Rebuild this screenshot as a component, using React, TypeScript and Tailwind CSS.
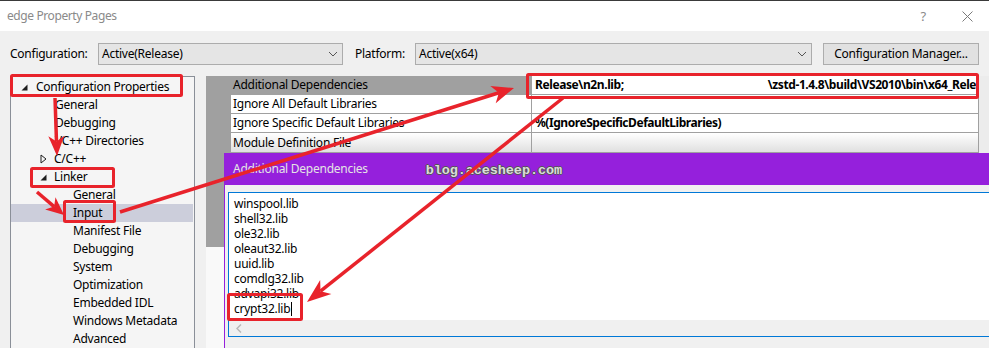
import React from "react";

const RED = "#e8232b";

function Arrow({ x1, y1, x2, y2, hl = 20, hw = 9 }: { x1: number; y1: number; x2: number; y2: number; hl?: number; hw?: number }) {
  const dx = x2 - x1;
  const dy = y2 - y1;
  const len = Math.hypot(dx, dy);
  const ux = dx / len;
  const uy = dy / len;
  const bx = x2 - ux * hl;
  const by = y2 - uy * hl;
  const nx = x2 - ux * hl * 0.72;
  const ny = y2 - uy * hl * 0.72;
  const px = -uy;
  const py = ux;
  return (
    <g>
      <line x1={x1} y1={y1} x2={nx} y2={ny} stroke={RED} strokeWidth={3.5} />
      <polygon
        points={`${x2},${y2} ${bx + px * hw},${by + py * hw} ${nx},${ny} ${bx - px * hw},${by - py * hw}`}
        fill={RED}
      />
    </g>
  );
}

function Expanded() {
  return (
    <svg width="7" height="7" viewBox="0 0 7 7">
      <polygon points="6.5,0.5 6.5,6.5 0.5,6.5" fill="#1e1e1e" />
    </svg>
  );
}

function Collapsed() {
  return (
    <svg width="7" height="10" viewBox="0 0 7 10">
      <polygon points="1,1 6,5 1,9" fill="none" stroke="#1e1e1e" strokeWidth="1" />
    </svg>
  );
}

function Chevron() {
  return (
    <svg width="10" height="6" viewBox="0 0 10 6">
      <polyline points="1,1 5,5 9,1" fill="none" stroke="#555" strokeWidth="1" />
    </svg>
  );
}

type Item = { label: string; kind: "root" | "exp" | "col" | "l1" | "l2"; selected?: boolean };

const items: Item[] = [
  { label: "Configuration Properties", kind: "root" },
  { label: "General", kind: "l1" },
  { label: "Debugging", kind: "l1" },
  { label: "VC++ Directories", kind: "l1" },
  { label: "C/C++", kind: "col" },
  { label: "Linker", kind: "exp" },
  { label: "General", kind: "l2" },
  { label: "Input", kind: "l2", selected: true },
  { label: "Manifest File", kind: "l2" },
  { label: "Debugging", kind: "l2" },
  { label: "System", kind: "l2" },
  { label: "Optimization", kind: "l2" },
  { label: "Embedded IDL", kind: "l2" },
  { label: "Windows Metadata", kind: "l2" },
  { label: "Advanced", kind: "l2" },
];

function TreeRow({ item }: { item: Item }) {
  const base = "flex items-center h-[18px] whitespace-nowrap " + (item.selected ? "bg-[#cccedb]" : "");
  if (item.kind === "root")
    return (
      <div className={base + " pl-[10px]"}>
        <span className="w-[15px] flex items-center">
          <Expanded />
        </span>
        <span>{item.label}</span>
      </div>
    );
  if (item.kind === "exp")
    return (
      <div className={base + " pl-[29px]"}>
        <span className="w-[14px] flex items-center">
          <Expanded />
        </span>
        <span>{item.label}</span>
      </div>
    );
  if (item.kind === "col")
    return (
      <div className={base + " pl-[29px]"}>
        <span className="w-[14px] flex items-center">
          <Collapsed />
        </span>
        <span>{item.label}</span>
      </div>
    );
  if (item.kind === "l1")
    return (
      <div className={base + " pl-[44px]"}>
        <span>{item.label}</span>
      </div>
    );
  return (
    <div className={base + " pl-[62px]"}>
      <span>{item.label}</span>
    </div>
  );
}

const libs = ["winspool.lib", "shell32.lib", "ole32.lib", "oleaut32.lib", "uuid.lib", "comdlg32.lib", "advapi32.lib"];

export default function App() {
  return (
    <div className="relative w-[989px] h-[348px] overflow-hidden bg-[#f0f0f0] text-[12px] tracking-[-0.25px] text-black font-['Noto_Sans',sans-serif] leading-none">
      {/* title bar */}
      <div className="h-[31px] bg-white border-t border-[#3a3a3a] flex items-center pl-[7px] pr-[16px]">
        <span className="text-[#8a8a8a] text-[12px] tracking-[-0.4px]">edge Property Pages</span>
        <span className="ml-auto text-[#8a8a8a] text-[13px] mr-[36px]">?</span>
        <svg width="11" height="11" viewBox="0 0 11 11">
          <path d="M0.5 0.5 L10.5 10.5 M10.5 0.5 L0.5 10.5" stroke="#7a7a7a" strokeWidth="1" />
        </svg>
      </div>

      {/* configuration row */}
      <div className="flex items-center mt-[12px] h-[22px] pl-[10px]">
        <span className="w-[88px]">Configuration:</span>
        <div className="w-[245px] h-[22px] bg-[#e5e5e5] border border-[#acacac] flex items-center pl-[3px] pr-[4px]">
          <span>Active(Release)</span>
          <span className="ml-auto">
            <Chevron />
          </span>
        </div>
        <span className="ml-[12px] w-[60px]">Platform:</span>
        <div className="w-[397px] h-[22px] bg-[#e5e5e5] border border-[#acacac] flex items-center pl-[3px] pr-[4px]">
          <span>Active(x64)</span>
          <span className="ml-auto">
            <Chevron />
          </span>
        </div>
        <div className="ml-[11px] w-[156px] h-[22px] bg-[#e1e1e1] border border-[#adadad] flex items-center justify-center">
          Configuration Manager...
        </div>
      </div>

      {/* main */}
      <div className="flex mt-[11px] h-[272px]">
        <div className="ml-[10px] w-[185px] border-l border-t border-r border-[#8a8f98] bg-[#f5f5f5] pt-[1px] pr-[1px]">
          {items.map((it, i) => (
            <TreeRow key={i} item={it} />
          ))}
        </div>

        <div className="ml-[11px] flex-1 flex flex-col">
          {/* property grid */}
          <div className="flex h-[77px]">
            <div className="w-[25px] bg-[#a0a0a0]" />
            <div className="w-[748px] border-r border-[#a0a0a0] flex flex-col">
              <div className="flex h-[19px] border-b border-[#a0a0a0]">
                <div className="w-[301px] bg-[#a0a0a0] flex items-center pl-[2px] border-r border-[#a0a0a0]">Additional Dependencies</div>
                <div className="flex-1 bg-white flex items-center pl-[3px] font-bold tracking-[-0.4px] overflow-hidden whitespace-nowrap">
                  <span>Release\n2n.lib;</span>
                  <span className="w-[1px] h-[2px] bg-[#555] ml-[2px] mb-[6px]" />
                  <span className="w-[1px] h-[1px] bg-[#444] ml-[13px] mt-[8px]" />
                  <span className="w-[1px] h-[1px] bg-[#444] ml-[35px] mt-[8px]" />
                  <span className="w-[1px] h-[1px] bg-[#444] ml-[20px] mt-[8px]" />
                  <span className="w-[1px] h-[1px] bg-[#444] ml-[14px] mt-[8px]" />
                  <span className="ml-[60px]">\zstd-1.4.8\build\VS2010\bin\x64_Release</span>
                </div>
              </div>
              <div className="flex h-[19px] border-b border-[#a0a0a0] bg-white">
                <div className="w-[301px] flex items-center pl-[2px] border-r border-[#a0a0a0]">Ignore All Default Libraries</div>
                <div className="flex-1" />
              </div>
              <div className="flex h-[19px] border-b border-[#a0a0a0] bg-white">
                <div className="w-[301px] flex items-center pl-[2px] border-r border-[#a0a0a0]">Ignore Specific Default Libraries</div>
                <div className="flex-1 flex items-center pl-[3px] font-bold tracking-[-0.45px]">%(IgnoreSpecificDefaultLibraries)</div>
              </div>
              <div className="flex h-[20px] border-b border-[#a0a0a0] bg-gradient-to-b from-white to-[#e0e0e0]">
                <div className="w-[301px] flex items-center pl-[2px] border-r border-[#a0a0a0]">Module Definition File</div>
                <div className="flex-1" />
              </div>
            </div>
            <div className="flex-1 bg-[#ececec]" />
          </div>

          {/* lower area with dialog */}
          <div className="flex flex-1">
            <div className="w-[18px] flex flex-col">
              <div className="h-[94px] bg-[#a0a0a0]" />
              <div className="flex-1 bg-[#f9f9f9]" />
            </div>
            <div className="flex-1 flex flex-col border-l border-[#9520dc]">
              <div className="h-[32px] bg-[#9520dc] flex items-center pl-[8px]">
                <span className="text-[#e4e4e4] text-[12px]">Additional Dependencies</span>
                <span className="ml-[58px] mt-[4px] text-[13.5px] font-['Liberation_Mono',monospace] font-bold tracking-[-0.1px] text-[#dcdcdc] [text-shadow:1px_0_#555,-1px_0_#555,0_1px_#555,0_-1px_#555]">
                  blog.acesheep.com
                </span>
              </div>
              <div className="flex-1 pt-[7px] pl-[3px]">
                <div className="h-[145px] border border-r-0 border-[#0078d7] bg-white flex flex-col">
                  <div className="flex-1 pt-[3px] pl-[5px] leading-[15px]">
                    {libs.map((l) => (
                      <div key={l} className="h-[15px]">
                        {l}
                      </div>
                    ))}
                    <div className="h-[15px] flex items-center">
                      <span>crypt32.lib</span>
                      <span className="w-[1px] h-[14px] bg-black ml-[1px]" />
                    </div>
                  </div>
                  <div className="h-[16px] bg-[#f0f0f0] flex items-center pl-[7px]">
                    <svg width="6" height="9" viewBox="0 0 6 9">
                      <polyline points="5,0.5 1,4.5 5,8.5" fill="none" stroke="#b8b8b8" strokeWidth="1.5" />
                    </svg>
                  </div>
                </div>
              </div>
            </div>
          </div>
        </div>
      </div>

      {/* red annotations overlay */}
      <svg className="absolute left-0 top-0 pointer-events-none" width="989" height="348" viewBox="0 0 989 348">
        <g fill="none" stroke={RED} strokeWidth="3">
          <rect x="11.5" y="75.5" width="170" height="20" rx="1" />
          <rect x="31.5" y="168.5" width="82" height="18" rx="1" />
          <rect x="64.5" y="201.5" width="50" height="20" rx="1" />
          <rect x="527.5" y="74.5" width="450" height="23" rx="1" />
          <rect x="228.5" y="294.5" width="73" height="25" rx="1" />
        </g>
        <Arrow x1={55} y1={98} x2={57} y2={156} hl={20} hw={8} />
        <Arrow x1={37} y1={192} x2={64} y2={215} hl={18} hw={8} />
        <Arrow x1={120} y1={212} x2={514} y2={88} hl={22} hw={9} />
        <Arrow x1={563} y1={98} x2={307} y2={302} hl={24} hw={9} />
      </svg>
    </div>
  );
}
